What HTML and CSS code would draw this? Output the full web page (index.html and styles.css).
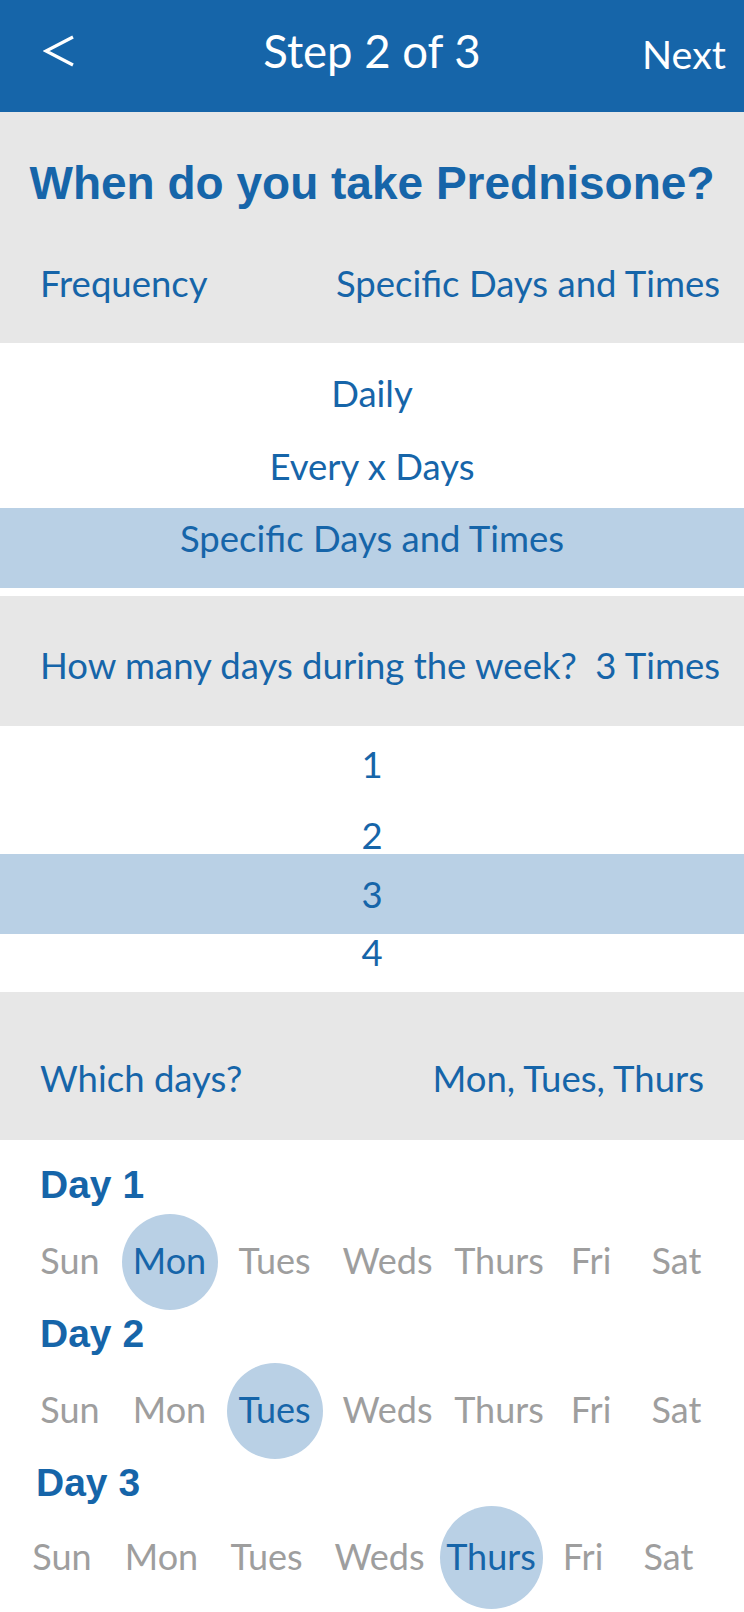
FILE: index.html
```html
<!DOCTYPE html>
<html lang="en">
<head>
    <meta charset="UTF-8">
    <meta name="viewport" content="width=device-width, initial-scale=1.0">
    <title>Step 2 of 3</title>

    <link rel="stylesheet" href="styles.css">
</head>
<body>

    <header class="topbar">
        <span class="back">
            <svg width="32" height="32" viewBox="0 0 32 32"><polyline points="30,2 3,16 30,30" fill="none" stroke="#fff" stroke-width="3.2"/></svg>
        </span>
        <h1 class="step">Step 2 of 3</h1>
        <span class="next">Next</span>
    </header>

    <section class="panel intro">
        <h2 class="question">When do you take Prednisone?</h2>
        <div class="pair">
            <span>Frequency</span>
            <span>Specific Days and Times</span>
        </div>
    </section>

    <ul class="picker freq">
        <li>Daily</li>
        <li>Every x Days</li>
        <li class="picked">Specific Days and Times</li>
    </ul>

    <section class="panel count">
        <div class="pair">
            <span>How many days during the week?</span>
            <span>3 Times</span>
        </div>
    </section>

    <ul class="picker nums">
        <li class="one">1</li>
        <li class="two">2</li>
        <li class="picked">3</li>
        <li class="four">4</li>
    </ul>

    <section class="panel which">
        <div class="pair">
            <span>Which days?</span>
            <span>Mon, Tues, Thurs</span>
        </div>
    </section>

    <section class="days">
        <div class="label">Day 1</div>
        <div class="week">
            <span class="day">Sun</span>
            <span class="day on">Mon</span>
            <span class="day">Tues</span>
            <span class="day">Weds</span>
            <span class="day">Thurs</span>
            <span class="day">Fri</span>
            <span class="day">Sat</span>
        </div>

        <div class="label">Day 2</div>
        <div class="week">
            <span class="day">Sun</span>
            <span class="day">Mon</span>
            <span class="day on">Tues</span>
            <span class="day">Weds</span>
            <span class="day">Thurs</span>
            <span class="day">Fri</span>
            <span class="day">Sat</span>
        </div>

        <div class="label last">Day 3</div>
        <div class="week last">
            <span class="day">Sun</span>
            <span class="day">Mon</span>
            <span class="day">Tues</span>
            <span class="day">Weds</span>
            <span class="day on">Thurs</span>
            <span class="day">Fri</span>
            <span class="day">Sat</span>
        </div>
    </section>

</body>
</html>
```

FILE: styles.css
```css
* {
    box-sizing: border-box;
    margin: 0;
    padding: 0;
}
body {
    width: 744px;
    background: #fff;
    color: #1665a9;
    font-family: Lato, "Open Sans", sans-serif;
    font-size: 36.5px;
}
.topbar {
    height: 112px;
    padding-bottom: 10px;
    display: grid;
    grid-template-columns: 1fr auto 1fr;
    align-items: center;
    background: #1665a9;
    color: #fff;
}
.back {
    margin-left: 43px;
    display: flex;
}
.step {
    font-weight: normal;
    font-size: 45.5px;
    line-height: 52px;
}
.next {
    justify-self: end;
    margin: 4px 18px 0 0;
    font-size: 39.5px;
}
.panel {
    background: #e7e7e7;
}
.pair {
    display: flex;
    justify-content: space-between;
    line-height: 42px;
    padding: 0 24px 0 40px;
}
.intro {
    padding: 43px 0 39px;
}
.question {
    font: bold 46px/56px "Liberation Sans", Arial, sans-serif;
    text-align: center;
    margin-bottom: 51px;
}
.picker {
    list-style: none;
    text-align: center;
}
.picked {
    background: #b9d0e5;
}
.freq {
    padding: 14px 0 8px;
}
.freq li {
    line-height: 73px;
}
.freq .picked {
    margin-top: 5px;
    line-height: 61px;
    padding-bottom: 19px;
}
.count {
    padding: 48px 0 40px;
}
.nums {
    padding-bottom: 22px;
}
.nums .one {
    line-height: 76px;
}
.nums .two {
    padding-top: 14px;
    line-height: 38px;
}
.nums .picked {
    line-height: 80px;
}
.nums .four {
    line-height: 36px;
}
.which {
    padding: 65px 0 41px;
}
.which .pair {
    padding-right: 40px;
}
.days {
    padding-top: 23px;
}
.label {
    font: bold 39px/44px "Liberation Sans", Arial, sans-serif;
    padding-left: 40px;
    margin-top: 2px;
}
.label:first-child {
    margin-top: 0;
}
.label.last {
    padding-left: 36px;
}
.week {
    display: grid;
    grid-template-columns: 96px 103px 107px 119px 104px 80px 91px;
    height: 96px;
    margin-top: 7px;
    padding-left: 22px;
    color: #9e9e9e;
    font-size: 36px;
}
.week.last {
    height: 103px;
    margin-top: 1px;
    padding-left: 14px;
}
.day {
    position: relative;
    z-index: 0;
    display: flex;
    align-items: center;
    justify-content: center;
    padding-bottom: 4px;
    white-space: nowrap;
}
.day.on {
    color: #1665a9;
}
.day.on::before {
    content: "";
    position: absolute;
    left: 50%;
    top: 50%;
    width: 96px;
    height: 96px;
    margin: -48px 0 0 -48px;
    border-radius: 50%;
    background: #b9d0e5;
    z-index: -1;
}
.week.last .day.on::before {
    width: 103px;
    height: 103px;
    margin: -51.5px 0 0 -51.5px;
}
```
